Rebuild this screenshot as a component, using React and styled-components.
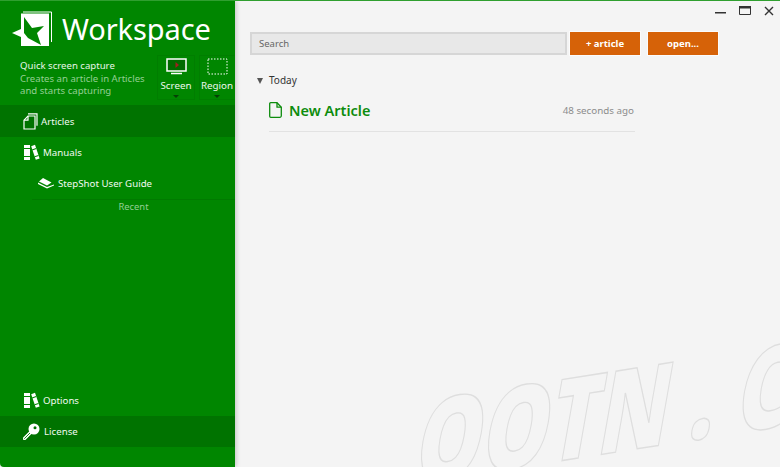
import React from 'react'
import styled, { createGlobalStyle } from 'styled-components'

const Global = createGlobalStyle`
  html, body { margin: 0; padding: 0; background: #f4f4f4; }
  body { font-family: "Noto Sans", "Open Sans", sans-serif; }
`

const Window = styled.div`
  position: relative;
  display: flex;
  width: 780px;
  height: 467px;
  overflow: hidden;
  background: #f4f4f4;
  border-top: 1px solid #2f9f2f;
  box-sizing: border-box;
`

const Sidebar = styled.aside`
  display: flex;
  flex-direction: column;
  flex: 0 0 235px;
  min-width: 0;
  background: #008600;
  color: #fff;
  border-bottom-left-radius: 4px;
  box-shadow: 1px 0 5px rgba(0, 0, 0, 0.22);
  z-index: 1;
`

const Header = styled.header`
  flex: 0 0 104px;
  box-sizing: border-box;
  padding: 10px 0 0 11px;
`

const Brand = styled.div`
  display: flex;
  align-items: flex-start;
  gap: 9px;
  height: 40px;
`

const Title = styled.h1`
  margin: -2px 0 0;
  font-size: 29px;
  font-weight: 400;
  line-height: 40px;
  letter-spacing: -0.1px;
`

const Capture = styled.div`
  display: flex;
  margin-top: 4px;
`

const CaptureText = styled.div`
  flex: 0 0 146px;
  padding: 5px 0 0 9px;
  box-sizing: border-box;
  font-size: 9.6px;
  line-height: 12.5px;
  color: #93cf93;
  strong {
    display: block;
    font-weight: 400;
    color: #e8f6e8;
  }
`

const CaptureButton = styled.div`
  display: flex;
  flex-direction: column;
  align-items: center;
  flex: 0 0 ${props => props.width}px;
  box-sizing: border-box;
  height: 45px;
  margin-left: ${props => props.gap || 0}px;
  padding-top: 2px;
  border: 1px solid #007e00;
  border-right-color: ${props => props.open ? 'transparent' : '#007e00'};
  font-size: 9.8px;
  line-height: 13px;
  color: #eef8ee;
  white-space: nowrap;
  svg { display: block; flex: none; }
  span { margin-top: 4px; }
`

const Caret = styled.i`
  display: block;
  width: 0;
  height: 0;
  margin-top: 3px;
  border-left: 3px solid transparent;
  border-right: 3px solid transparent;
  border-top: 3px solid #063f06;
`

const NavRow = styled.div`
  display: flex;
  align-items: center;
  height: ${props => props.height || 31}px;
  padding-left: ${props => props.indent || 19}px;
  background: ${props => props.active ? '#007300' : 'transparent'};
  font-size: 9.7px;
  color: #f2faf2;
`

const NavIcon = styled.span`
  display: flex;
  justify-content: center;
  flex: 0 0 ${props => props.width || 24}px;
`

const SubRule = styled.div`
  height: 1px;
  margin-left: 32px;
  background: #007a00;
`

const Recent = styled.div`
  margin-left: 32px;
  text-align: center;
  font-size: 9.4px;
  line-height: 14px;
  color: #93cf93;
`

const Spacer = styled.div`
  flex: 1;
`

const Footer = styled.div`
  padding-bottom: 20px;
`

const Main = styled.main`
  position: relative;
  flex: 1;
  padding: 31px 0 0 15px;
`

const WindowControls = styled.div`
  position: absolute;
  top: 4px;
  right: 6px;
  display: flex;
  align-items: center;
  gap: 13px;
  svg { display: block; }
`

const Toolbar = styled.div`
  display: flex;
  align-items: stretch;
  height: 23px;
`

const Search = styled.div`
  flex: 0 0 317px;
  box-sizing: border-box;
  border: 2px solid #d6d6d6;
  background: #e8e8e8;
  padding-left: 7px;
  font-size: 9.5px;
  line-height: 19px;
  color: #666;
`

const Button = styled.div`
  flex: 0 0 70px;
  margin-left: ${props => props.gap}px;
  background: #d66208;
  box-shadow: 0 0 0 1px #fbfbfb;
  color: #fff;
  font-size: 9.5px;
  font-weight: 700;
  line-height: 23px;
  text-align: center;
`

const Group = styled.div`
  display: flex;
  align-items: center;
  margin: 18px 0 0 7px;
  font-size: 10px;
  line-height: 15px;
  color: #333;
  &::before {
    content: "";
    margin-right: 6px;
    border-left: 3.5px solid transparent;
    border-right: 3.5px solid transparent;
    border-top: 6px solid #555;
  }
`

const Article = styled.div`
  display: flex;
  align-items: center;
  width: 366px;
  height: 38px;
  margin: 6px 0 0 19px;
  box-sizing: border-box;
  border-bottom: 1px solid #e2e2e2;
  padding: 0 1px 5px 0;
`

const ArticleTitle = styled.span`
  flex: 1;
  margin-left: 7px;
  color: #0d8c0d;
  font-size: 14.5px;
  font-weight: 600;
`

const Age = styled.span`
  font-size: 9.8px;
  color: #8c8c8c;
`

const Watermark = styled.div`
  position: absolute;
  left: 174px;
  top: 386px;
  font-family: "Open Sans", "Noto Sans", sans-serif;
  font-size: 112px;
  font-weight: 800;
  line-height: 110px;
  white-space: pre;
  color: transparent;
  -webkit-text-stroke: 1.4px #dedede;
  transform: rotate(-9deg) skewX(-19deg) scaleX(0.76);
  transform-origin: left bottom;
  pointer-events: none;
`

const BooksIcon = () => (
  <svg width="17" height="17" viewBox="0 0 17 17" fill="#fff">
    <path d="M1 1h6v15H1z" />
    <path d="M8.2 2.2 12 .8l4.6 13.6-3.8 1.4z" />
    <path d="M1 4h6v1H1zM1 12h6v1H1zM9 5.4l4-1.4.3 1-4 1.4zM11.4 12.3l4-1.4.3 1-4 1.4z" fill="#008600" />
  </svg>
)

const PagesIcon = () => (
  <svg width="15" height="17" viewBox="0 0 15 17" fill="none" stroke="#fff" strokeWidth="1.2">
    <path d="M5 .8h9v12" />
    <path d="M5 3h7v13H1V7.2z" />
    <path d="M5 3v4.2H1" />
  </svg>
)

const BookIcon = () => (
  <svg width="17" height="11" viewBox="0 0 17 11" fill="#fff">
    <path d="M5 0l8.500 4.500L9 7.500 1 3.500z" />
    <path d="M0 4.500 9 9l7-2.500v1L9 10.500 0 6z" />
  </svg>
)

const KeyIcon = () => (
  <svg width="17" height="17" viewBox="0 0 17 17">
    <path d="M1.5 15.5 8 9" stroke="#fff" strokeWidth="3.2" strokeLinecap="round" />
    <path d="M1.5 15.5 7 10" stroke="#008000" strokeWidth="0.9" strokeLinecap="round" />
    <circle cx="11" cy="6" r="5.5" fill="#fff" />
    <circle cx="12" cy="4.8" r="1.5" fill="#007300" />
  </svg>
)

const LogoIcon = () => (
  <svg width="42" height="38" viewBox="0 0 42 38" style={{ flex: 'none' }}>
    <path d="M12 1h28.500v30" fill="none" stroke="#fff" />
    <path d="M10 2.500h28V35H10v-9l-9-4 9-4z" fill="#fff" />
    <path d="M13 6l8 11 12-2-7 7 4 12-13-7-4-5z" fill="#008600" />
  </svg>
)

const ScreenIcon = () => (
  <svg width="21" height="17" viewBox="0 0 21 17">
    <rect x="1" y="1" width="19" height="12" fill="#006b00" stroke="#fff" strokeWidth="1.5" />
    <path d="M9.5 4l3.500 3-3.500 3z" fill="#a02020" />
    <path d="M5 15.500h11" stroke="#fff" strokeWidth="1.5" />
  </svg>
)

const RegionIcon = () => (
  <svg width="21" height="17" viewBox="0 0 21 17">
    <rect x="1" y="1" width="19" height="15" fill="none" stroke="#fff" strokeDasharray="1.5 1.5" />
  </svg>
)

const DocIcon = () => (
  <svg width="13" height="16" viewBox="0 0 13 16" fill="none" stroke="#0d8c0d" strokeWidth="1.3">
    <path d="M1.7.7h6.300l4.300 4.500v8.600a1.500 1.500 0 0 1-1.500 1.500H1.700a1 1 0 0 1-1-1V1.700a1 1 0 0 1 1-1z" />
    <path d="M8 .7v4.500h4.300" />
  </svg>
)

const MinimizeIcon = () => (
  <svg width="11" height="11" viewBox="0 0 11 11"><path d="M0 7h11v1.500H0z" fill="#333" /></svg>
)

const MaximizeIcon = () => (
  <svg width="12" height="9" viewBox="0 0 12 9">
    <path d="M.5.5h11v8H.5z" fill="none" stroke="#333" />
    <path d="M0 0h12v2.500H0z" fill="#333" />
  </svg>
)

const CloseIcon = () => (
  <svg width="10" height="10" viewBox="0 0 10 10"><path d="M1 1l8 8M9 1l-8 8" stroke="#333" strokeWidth="1.4" /></svg>
)

export default function App() {
  return (
    <Window>
      <Global />
      <Sidebar>
        <Header>
          <Brand>
            <LogoIcon />
            <Title>Workspace</Title>
          </Brand>
          <Capture>
            <CaptureText>
              <strong>Quick screen capture</strong>
              Creates an article in Articles<br />and starts capturing
            </CaptureText>
            <CaptureButton width={38}>
              <ScreenIcon />
              <span>Screen</span>
              <Caret />
            </CaptureButton>
            <CaptureButton width={36} gap={4} open>
              <RegionIcon />
              <span>Region</span>
              <Caret />
            </CaptureButton>
          </Capture>
        </Header>
        <NavRow active height={32}>
          <NavIcon width={22}><PagesIcon /></NavIcon>
          Articles
        </NavRow>
        <NavRow>
          <NavIcon width={24}><BooksIcon /></NavIcon>
          Manuals
        </NavRow>
        <NavRow indent={35}>
          <NavIcon width={23}><BookIcon /></NavIcon>
          StepShot User Guide
        </NavRow>
        <SubRule />
        <Recent>Recent</Recent>
        <Spacer />
        <Footer>
          <NavRow>
            <NavIcon width={24}><BooksIcon /></NavIcon>
            Options
          </NavRow>
          <NavRow active>
            <NavIcon width={25}><KeyIcon /></NavIcon>
            License
          </NavRow>
        </Footer>
      </Sidebar>
      <Main>
        <WindowControls>
          <MinimizeIcon />
          <MaximizeIcon />
          <CloseIcon />
        </WindowControls>
        <Toolbar>
          <Search>Search</Search>
          <Button gap={3}>+ article</Button>
          <Button gap={8}>open...</Button>
        </Toolbar>
        <Group>Today</Group>
        <Article>
          <DocIcon />
          <ArticleTitle>New Article</ArticleTitle>
          <Age>48 seconds ago</Age>
        </Article>
        <Watermark>QOTN . C</Watermark>
      </Main>
    </Window>
  )
}
